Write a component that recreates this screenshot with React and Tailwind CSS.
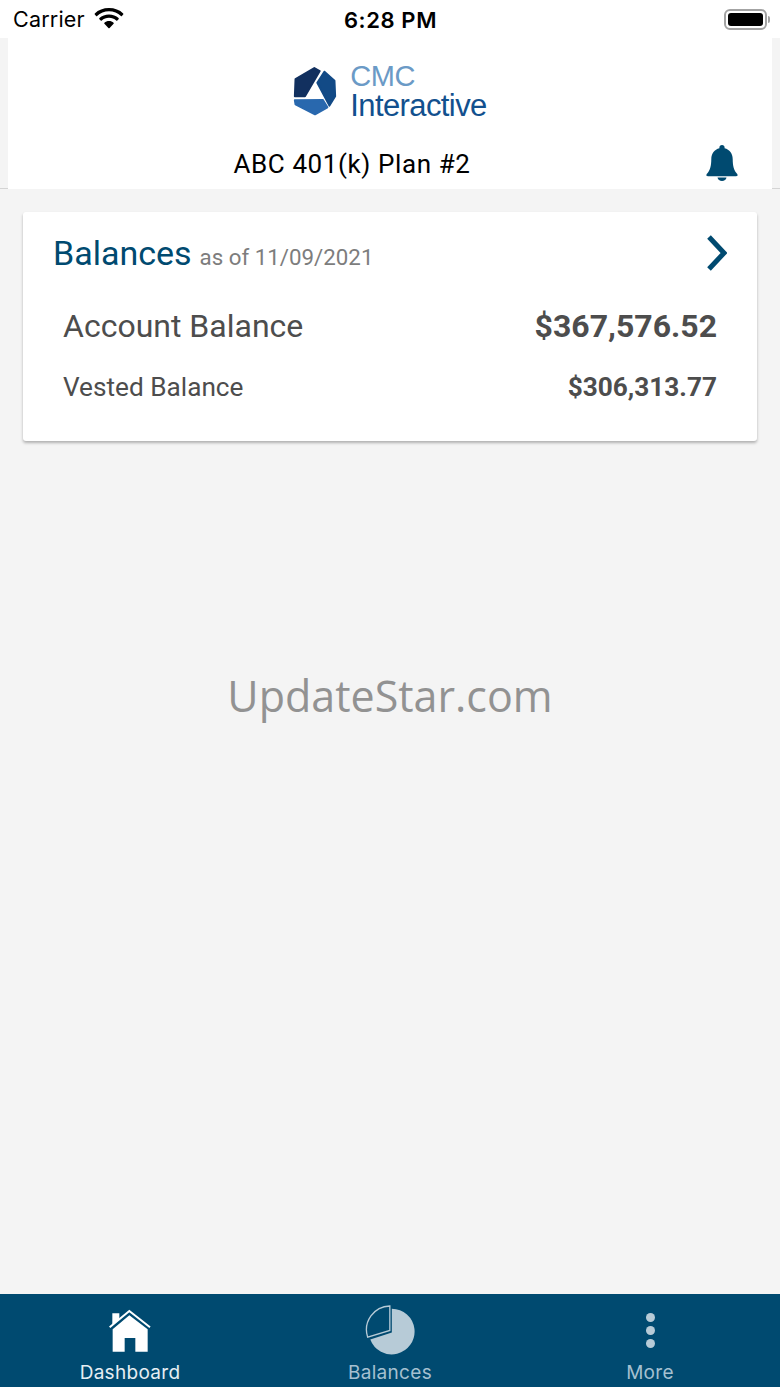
function Wifi() {
  return (
    <svg width="30" height="22" viewBox="0 0 30 22" fill="currentColor">
      <path d="M15 3.2c4.6 0 8.8 1.8 11.9 4.8.3.3.7.3 1 0l1.3-1.4c.3-.3.3-.8 0-1.100C25.800 1.900 20.600 0 15 0S4.200 1.900.800 5.500c-.3.300-.3.800 0 1.100L2.100 8c.3.300.7.300 1 0C6.200 5 10.400 3.200 15 3.200z" />
      <path d="M15 9.800c2.800 0 5.300 1 7.200 2.800.3.300.8.300 1.100 0l1.300-1.400c.3-.3.3-.8 0-1.100C22.100 7.700 18.700 6.400 15 6.400s-7.100 1.300-9.600 3.700c-.3.300-.3.800 0 1.100l1.300 1.400c.3.300.8.300 1.100 0 1.900-1.800 4.400-2.800 7.200-2.800z" />
      <path d="M15 13c-1.800 0-3.400.6-4.600 1.700-.3.300-.3.800 0 1.100l4 4.200c.3.300.9.300 1.200 0l4-4.200c.3-.3.3-.8 0-1.100C18.400 13.600 16.800 13 15 13z" />
    </svg>
  );
}

function Battery() {
  return (
    <div className="flex items-center gap-[1px]">
      <div className="h-[21px] w-[43px] rounded-[6px] border-2 border-[#a3a3a3] p-[2px]">
        <div className="h-full w-full rounded-[3px] bg-black" />
      </div>
      <div className="h-[7px] w-[2px] rounded-r-full bg-[#a3a3a3]" />
    </div>
  );
}

function Logo() {
  return (
    <svg width="44" height="52" viewBox="885 195 130 155" strokeLinejoin="round" strokeWidth="6">
      <path d="M948 204 L892 237 L890 288 L920 288 L964 213 Z" fill="#12305f" stroke="#12305f" />
      <path d="M978 215 L1008 242 L1010 288 L993 316 L957 248 Z" fill="#124a86" stroke="#124a86" />
      <path d="M890 300 L973 299 L987 321 L950 342 L892 312 Z" fill="#2968ae" stroke="#2968ae" />
    </svg>
  );
}

function Bell() {
  return (
    <svg width="32" height="36" viewBox="0 0 32 36" fill="#004a70">
      <path d="M16 0c-1.600 0-2.600 1.100-2.600 2.500v.7C8.500 4.400 5.300 8.500 5.300 14c0 7-1.400 11-3.300 13.500-.8 1-1.600 1.700-1.600 2.500 0 .8.600 1.200 1.400 1.200h28.400c.8 0 1.400-.4 1.400-1.200 0-.8-.8-1.500-1.600-2.500-1.900-2.500-3.300-6.500-3.300-13.500 0-5.500-3.200-9.600-8.100-10.800v-.7C18.600 1.100 17.600 0 16 0z" />
      <path d="M11.500 32.500c.3 2 2.200 3.500 4.500 3.500s4.200-1.500 4.500-3.500z" />
    </svg>
  );
}

function Chevron() {
  return (
    <svg width="20" height="36" viewBox="0 0 20 36" fill="none" stroke="#004a70" strokeWidth="5">
      <path d="M2 2 L17 18 L2 34" />
    </svg>
  );
}

function HomeIcon() {
  return (
    <svg width="44" height="45" viewBox="325 60 130 135">
      <path d="M337 76 H358 V94 L337 112 Z" fill="#fff" />
      <path d="M329 118 L388 69 L450 118" fill="none" stroke="#fff" strokeWidth="6" />
      <path d="M338 124 L388 82 L443 124 V191 H406 V150 H374 V191 H338 Z" fill="#fff" />
    </svg>
  );
}

function PieIcon() {
  return (
    <svg width="53" height="53" viewBox="190 50 160 160">
      <path d="M274 64 A69 69 0 1 1 209 157 L274 136 Z" fill="#b7cbd7" />
      <path d="M268 56 V130 L201 150 A72 72 0 0 1 268 56 Z" fill="none" stroke="#b7cbd7" strokeWidth="4" />
    </svg>
  );
}

function DotsIcon() {
  return (
    <div className="flex flex-col gap-[4px]">
      <div className="size-[9px] rounded-full bg-[#b7cbd7]" />
      <div className="size-[9px] rounded-full bg-[#b7cbd7]" />
      <div className="size-[9px] rounded-full bg-[#b7cbd7]" />
    </div>
  );
}

function TabItem({ icon, label, active }) {
  return (
    <div className="flex flex-1 flex-col items-center">
      <div className="flex h-[68px] items-center justify-center pt-[4px]">{icon}</div>
      <span
        className={`font-['Inter',sans-serif] text-[19px] leading-[22px] tracking-[0.3px] ${active ? "text-[#e6eef3]" : "text-[#a5c0d0]"}`}
      >
        {label}
      </span>
    </div>
  );
}

export default function App() {
  return (
    <div className="flex h-[1387px] w-[780px] flex-col overflow-hidden bg-[#f4f4f4] font-['Roboto',sans-serif]">
      <div className="flex h-[38px] items-center justify-between bg-white pl-[13px] pr-[10px] font-['Inter',sans-serif] text-black">
        <div className="flex w-[200px] items-center gap-[9px]">
          <span className="text-[21.500px] tracking-[0.2px]">Carrier</span>
          <Wifi />
        </div>
        <span className="pr-[2px] pt-[2px] text-[22px] font-semibold tracking-[0.6px]">6:28 PM</span>
        <div className="flex w-[200px] justify-end">
          <Battery />
        </div>
      </div>

      <div className="border-b border-[#d4d4d4]">
        <div className="mx-2 -mb-px h-[151px] bg-white pt-[23px]">
          <div className="flex items-center justify-center">
            <Logo />
            <div className="ml-[13px] font-['Liberation_Sans',sans-serif]">
              <div className="text-[29px] leading-[30px] tracking-[-0.5px] text-[#6b9ac6]">CMC</div>
              <div className="text-[31px] leading-[30px] tracking-[-0.6px] text-[#12508e]">Interactive</div>
            </div>
          </div>
          <div className="relative mt-[25px] flex h-[36px] items-center justify-center pr-[76px]">
            <span className="text-[26px] tracking-[0.6px] text-black">ABC 401(k) Plan #2</span>
            <div className="absolute right-[34px] -top-px">
              <Bell />
            </div>
          </div>
        </div>
      </div>

      <main className="flex flex-1 flex-col px-[23px] pt-[23px]">
        <div className="h-[229px] rounded-[3px] bg-white pl-[30px] pr-[30px] pt-[19px] shadow-[0_2px_3px_rgba(0,0,0,0.28)]">
          <div className="flex h-[44px] items-center justify-between">
            <div className="flex items-baseline gap-[8px]">
              <span className="text-[34px] text-[#004a70]">Balances</span>
              <span className="text-[22.300px] text-[#7d7d7d]">as of 11/09/2021</span>
            </div>
            <Chevron />
          </div>
          <div className="mt-[29px] flex items-center justify-between pl-[10px] pr-[10px] text-[#4d4d4d]">
            <span className="text-[32px] leading-[44px]">Account Balance</span>
            <span className="text-[32px] font-bold leading-[44px]">$367,576.52</span>
          </div>
          <div className="mt-[24px] flex items-center justify-between pl-[10px] pr-[10px] text-[#4d4d4d]">
            <span className="text-[26.200px] leading-[30px]">Vested Balance</span>
            <span className="text-[26.200px] font-bold leading-[30px]">$306,313.77</span>
          </div>
        </div>
        <div className="mt-[222px] text-center font-['Open_Sans',sans-serif] text-[43px] leading-[66px] text-[#929292]">
          UpdateStar.com
        </div>
      </main>

      <nav className="flex h-[93px] bg-[#004a70]">
        <TabItem icon={<HomeIcon />} label="Dashboard" active />
        <TabItem icon={<PieIcon />} label="Balances" />
        <TabItem icon={<DotsIcon />} label="More" />
      </nav>
    </div>
  );
}
